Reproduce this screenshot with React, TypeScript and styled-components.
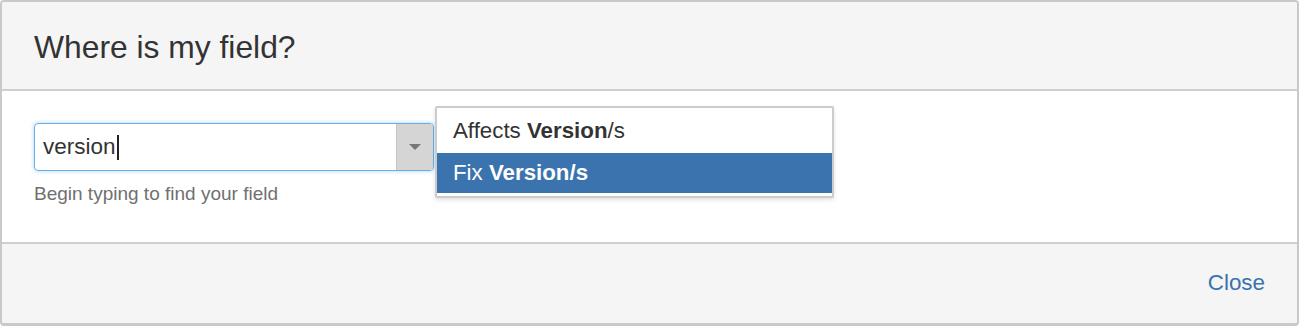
import styled, { createGlobalStyle } from "styled-components";

const GlobalStyle = createGlobalStyle`
  html, body {
    margin: 0;
    padding: 0;
    background: #fff;
  }
  body {
    font-family: "Liberation Sans", Arial, sans-serif;
  }
`;

const Dialog = styled.div`
  width: 1299px;
  height: 326px;
  box-sizing: border-box;
  border: 2px solid #c9c9c9;
  border-bottom-width: 3px;
  border-radius: 4px;
  display: flex;
  flex-direction: column;
  overflow: hidden;
  background: #f5f5f5;
`;

const Header = styled.div`
  height: 89px;
  box-sizing: border-box;
  display: flex;
  align-items: center;
  padding: 0 32px;
  background: #f5f5f5;
  border-bottom: 2px solid #cfcfcf;
`;

const Title = styled.h2`
  margin: 0;
  font-size: 31.8px;
  font-weight: normal;
  color: #333;
  padding-top: 4px;
`;

const Body = styled.div`
  position: relative;
  height: 153px;
  box-sizing: border-box;
  background: #fff;
  padding: 32px 32px 0;
  border-bottom: 2px solid #cfcfcf;
`;

const Field = styled.div`
  width: 400px;
  height: 48px;
  box-sizing: border-box;
  display: flex;
  border: 1px solid #66afe9;
  border-radius: 4px;
  box-shadow: 0 0 4px rgba(102, 175, 233, 0.55);
  overflow: hidden;
`;

const FieldText = styled.div`
  flex: 1;
  display: flex;
  align-items: center;
  padding-left: 8px;
  font-size: 22.5px;
  color: #333;
`;

const Cursor = styled.span`
  display: inline-block;
  width: 2px;
  height: 25px;
  margin-left: 1px;
  background: #222;
`;

const DropButton = styled.div`
  width: 36px;
  display: flex;
  align-items: center;
  justify-content: center;
  background: #d5d5d5;
  border-left: 1px solid #c4c4c4;
`;

const Caret = styled.span`
  width: 0;
  height: 0;
  border-left: 6px solid transparent;
  border-right: 6px solid transparent;
  border-top: 6px solid #777;
`;

const Help = styled.div`
  margin-top: 12px;
  font-size: 19px;
  color: #707070;
`;

const Menu = styled.div`
  position: absolute;
  left: 433px;
  top: 15px;
  width: 399px;
  box-sizing: border-box;
  background: #fff;
  border: 2px solid #ccc;
  border-radius: 2px;
  box-shadow: 0 2px 4px rgba(0, 0, 0, 0.12);
  padding: 0 0 3px;
`;

const Option = styled.div<{ $active?: boolean }>`
  height: ${({ $active }) => ($active ? "40px" : "45px")};
  display: flex;
  align-items: center;
  padding-left: 16px;
  font-size: 22.3px;
  color: ${({ $active }) => ($active ? "#fff" : "#333")};
  background: ${({ $active }) => ($active ? "#3b73af" : "#fff")};

  b {
    font-weight: bold;
  }
`;

const Footer = styled.div`
  flex: 1;
  display: flex;
  align-items: center;
  justify-content: flex-end;
  padding: 0 32px 2px;
  background: #f5f5f5;
`;

const CloseLink = styled.a`
  font-size: 22.4px;
  color: #3b73af;
  text-decoration: none;
  cursor: pointer;
`;

export default function App() {
  return (
    <>
      <GlobalStyle />
      <Dialog>
        <Header>
          <Title>Where is my field?</Title>
        </Header>
        <Body>
          <Field>
            <FieldText>
              version
              <Cursor />
            </FieldText>
            <DropButton>
              <Caret />
            </DropButton>
          </Field>
          <Help>Begin typing to find your field</Help>
          <Menu>
            <Option>
              Affects&nbsp;<b>Version</b>/s
            </Option>
            <Option $active>
              Fix&nbsp;<b>Version/s</b>
            </Option>
          </Menu>
        </Body>
        <Footer>
          <CloseLink>Close</CloseLink>
        </Footer>
      </Dialog>
    </>
  );
}
